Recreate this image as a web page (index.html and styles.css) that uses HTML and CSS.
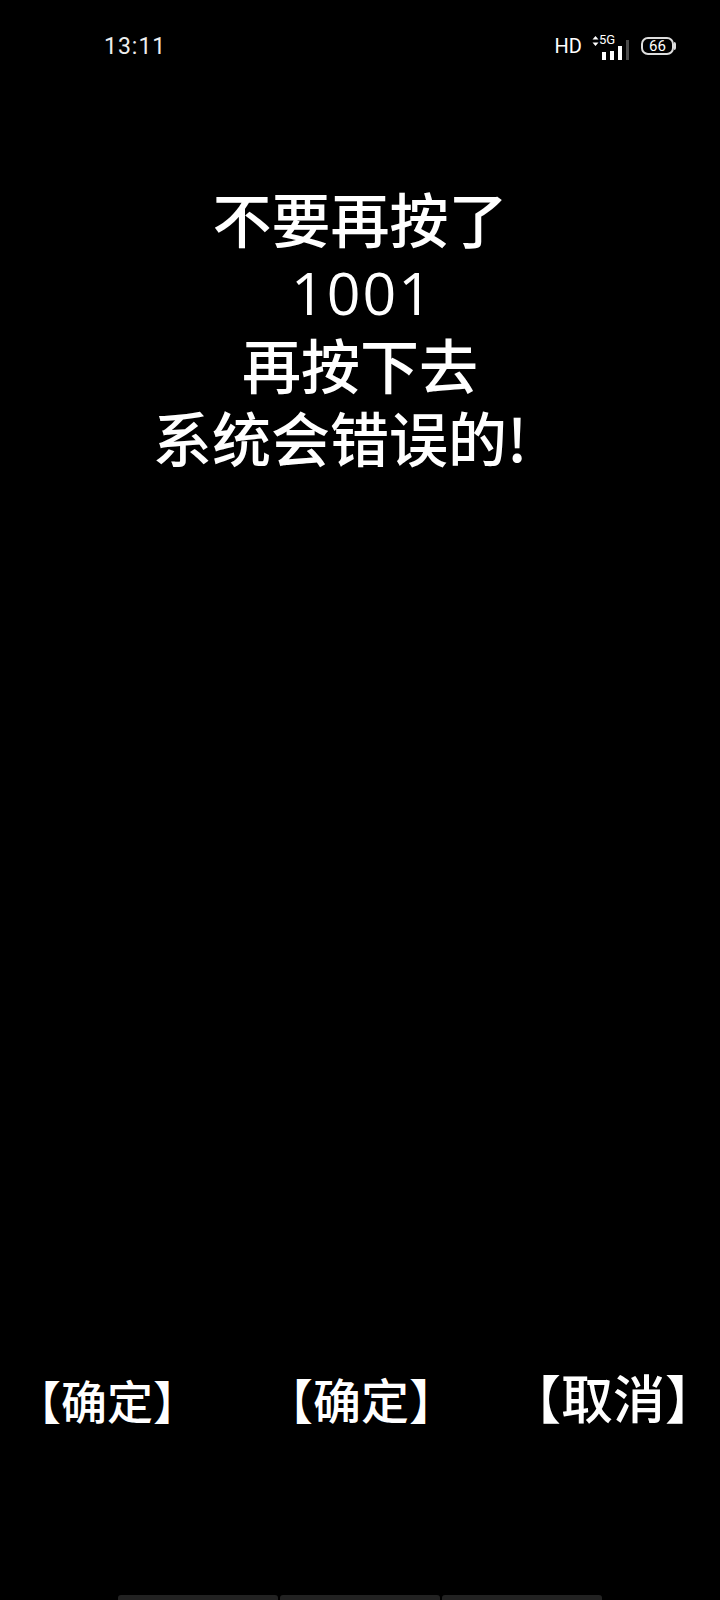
FILE: index.html
```html
<!DOCTYPE html>
<html lang="zh-CN">
<head>
  <meta charset="UTF-8" />
  <title>不要再按了</title>
  <link rel="stylesheet" href="styles.css">
</head>
<body>

  <div class="status-bar">
    <span class="clock">13:11</span>
    <div class="status-icons">
      <span class="hd">HD</span>
      <div class="signal">
        <svg class="arrows" width="7" height="10" viewBox="0 0 7 10">
          <path d="M3.5 0 6.5 3.6H0.5Z M3.5 10 0.5 6.4H6.5Z" fill="#fff" />
        </svg>
        <span class="net">5G</span>
        <div class="bars">
          <i class="bar bar-1"></i>
          <i class="bar bar-2"></i>
          <i class="bar bar-3"></i>
          <i class="bar bar-4"></i>
        </div>
      </div>
      <div class="battery"><span>66</span></div>
    </div>
  </div>

  <div class="message">
    <div>不要再按了</div>
    <div class="count">1001</div>
    <div>再按下去</div>
    <div class="last-line">系统会错误的!</div>
  </div>

  <div class="buttons">
    <span class="btn btn-first">【确定】</span>
    <span class="btn btn-second">【确定】</span>
    <span class="btn btn-cancel">【取消】</span>
  </div>

  <div class="tabs">
    <div class="tab"></div>
    <div class="tab"></div>
    <div class="tab"></div>
  </div>

</body>
</html>
```

FILE: styles.css
```css
* {
  box-sizing: border-box;
}
html, body {
  height: 100%;
}
body {
  margin: 0;
  background: #000;
  color: #fff;
  font-family: "Noto Sans CJK SC", "Noto Sans", sans-serif;
  display: flex;
  flex-direction: column;
  overflow: hidden;
}
.status-bar {
  display: flex;
  justify-content: space-between;
  align-items: center;
  height: 46px;
  margin-top: 23px;
  padding: 0 46px 0 104px;
}
.clock {
  font-family: Roboto, sans-serif;
  font-size: 23px;
  letter-spacing: 1px;
  color: #eee;
}
.status-icons {
  display: flex;
  align-items: center;
}
.hd {
  font-family: Roboto, sans-serif;
  font-size: 20px;
  margin-right: 10px;
}
.signal {
  position: relative;
  display: flex;
  width: 37px;
  height: 28px;
  margin-right: 12px;
}
.arrows {
  margin-top: 4px;
}
.net {
  font-family: Roboto, sans-serif;
  font-size: 13px;
  line-height: 16px;
}
.bars {
  position: absolute;
  right: 0;
  bottom: 0;
  display: flex;
  align-items: flex-end;
  gap: 4px;
}
.bar {
  width: 4px;
  background: #fff;
}
.bar-1 { height: 8px; }
.bar-2 { height: 9px; }
.bar-3 { height: 14px; }
.bar-4 { width: 3px; height: 20px; background: #4a4a4a; }
.battery {
  position: relative;
  width: 33px;
  height: 18px;
  border: 2px solid #ddd;
  border-radius: 7px;
  font-family: Roboto, sans-serif;
  font-size: 15px;
  line-height: 14px;
  text-align: center;
}
.battery::after {
  content: "";
  position: absolute;
  right: -4px;
  top: 3px;
  width: 2px;
  height: 8px;
  background: #ddd;
  border-radius: 0 2px 2px 0;
}
.message {
  margin-top: 112px;
  text-align: center;
  font-size: 59px;
  font-weight: 500;
  line-height: 73px;
}
.count {
  font-family: "Open Sans", sans-serif;
  font-weight: 500;
  letter-spacing: 2px;
  padding-left: 5px;
  margin: 2px 0 -2px;
}
.last-line {
  padding-right: 40px;
}
.buttons {
  display: flex;
  align-items: baseline;
  margin-top: auto;
  margin-bottom: 166px;
  padding-left: 15px;
  font-weight: 500;
}
.btn {
  line-height: 60px;
}
.btn-first {
  font-size: 46px;
}
.btn-second {
  font-size: 48px;
  margin-left: 66px;
}
.btn-cancel {
  font-size: 52px;
  margin-left: 52px;
}
.tabs {
  display: flex;
  justify-content: center;
  gap: 2px;
  height: 6px;
  margin-bottom: -1px;
}
.tab {
  width: 160px;
  background: #222;
  border-radius: 3px 3px 0 0;
}
```
